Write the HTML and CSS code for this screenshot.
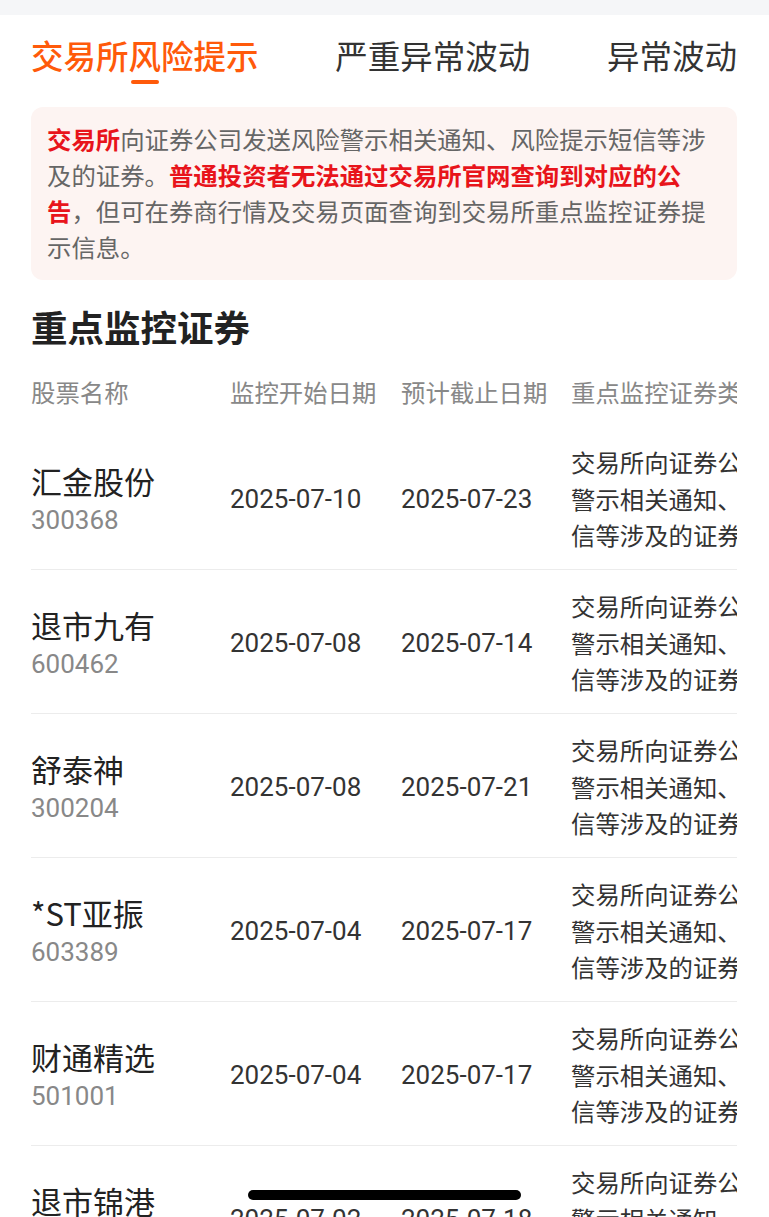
FILE: index.html
```html
<!DOCTYPE html>
<html lang="zh-CN">
<head>
    <meta charset="UTF-8">
    <meta name="viewport" content="width=device-width, initial-scale=1.0">
    <title>重点监控证券</title>
    <link rel="stylesheet" href="styles.css">
</head>
<body>

    <div class="status-bar"></div>

    <div class="tabs">
        <div class="tab active">
            <span>交易所风险提示</span>
            <i class="tab-line"></i>
        </div>
        <div class="tab"><span>严重异常波动</span></div>
        <div class="tab"><span>异常波动</span></div>
    </div>

    <div class="page">
        <div class="notice">
            <b>交易所</b>向证券公司发送风险警示相关通知、风险提示短信等涉及的证券。<b>普通投资者无法通过交易所官网查询到对应的公告</b>，但可在券商行情及交易页面查询到交易所重点监控证券提示信息。
        </div>

        <h2 class="section-title">重点监控证券</h2>

        <div class="table-wrap">
            <div class="table">
                <div class="row head">
                    <div class="cell">股票名称</div>
                    <div class="cell">监控开始日期</div>
                    <div class="cell">预计截止日期</div>
                    <div class="cell">重点监控证券类型</div>
                </div>

                <div class="row">
                    <div class="cell name">汇金股份<small>300368</small></div>
                    <div class="cell date">2025-07-10</div>
                    <div class="cell date">2025-07-23</div>
                    <div class="cell desc">交易所向证券公司发送风险警示相关通知、风险提示短信等涉及的证券</div>
                </div>

                <div class="row">
                    <div class="cell name">退市九有<small>600462</small></div>
                    <div class="cell date">2025-07-08</div>
                    <div class="cell date">2025-07-14</div>
                    <div class="cell desc">交易所向证券公司发送风险警示相关通知、风险提示短信等涉及的证券</div>
                </div>

                <div class="row">
                    <div class="cell name">舒泰神<small>300204</small></div>
                    <div class="cell date">2025-07-08</div>
                    <div class="cell date">2025-07-21</div>
                    <div class="cell desc">交易所向证券公司发送风险警示相关通知、风险提示短信等涉及的证券</div>
                </div>

                <div class="row">
                    <div class="cell name">*ST亚振<small>603389</small></div>
                    <div class="cell date">2025-07-04</div>
                    <div class="cell date">2025-07-17</div>
                    <div class="cell desc">交易所向证券公司发送风险警示相关通知、风险提示短信等涉及的证券</div>
                </div>

                <div class="row">
                    <div class="cell name">财通精选<small>501001</small></div>
                    <div class="cell date">2025-07-04</div>
                    <div class="cell date">2025-07-17</div>
                    <div class="cell desc">交易所向证券公司发送风险警示相关通知、风险提示短信等涉及的证券</div>
                </div>

                <div class="row">
                    <div class="cell name">退市锦港<small>600190</small></div>
                    <div class="cell date">2025-07-02</div>
                    <div class="cell date">2025-07-18</div>
                    <div class="cell desc">交易所向证券公司发送风险警示相关通知、风险提示短信等涉及的证券</div>
                </div>
            </div>
        </div>
    </div>

    <!-- 底部横条 -->
    <div class="home-bar"></div>

</body>
</html>
```

FILE: styles.css
```css
body {
    margin: 0;
    background: #fff;
    font-family: "Noto Sans CJK SC", sans-serif;
    color: #222;
}
.status-bar {
    height: 15px;
    background: #f5f6f8;
}
.tabs {
    display: flex;
    justify-content: space-between;
    padding: 19px 32px 0 31px;
}
.tab {
    display: flex;
    flex-direction: column;
    align-items: center;
    font-size: 32.5px;
    line-height: 41px;
    color: #333;
}
.tab.active {
    color: #ff5a0a;
    font-weight: 500;
}
.tab-line {
    display: block;
    width: 28px;
    height: 4px;
    margin-top: 5px;
    border-radius: 2px;
    background: #ff5a0a;
}
.page {
    padding: 0 32px 0 31px;
}
.notice {
    margin-top: 23px;
    padding: 14px 16px 15px;
    background: #fdf4f2;
    border-radius: 12px;
    font-size: 24.4px;
    line-height: 36px;
    color: #666;
}
.notice b {
    color: #e8141b;
    font-weight: 700;
}
.section-title {
    margin: 22px 0 0;
    font-size: 36.5px;
    line-height: 50px;
    font-weight: 700;
    color: #222;
}
.table-wrap {
    margin-top: 18px;
    overflow: hidden;
}
.table {
    width: 836px;
}
.row {
    display: grid;
    grid-template-columns: 199px 171px 170px 296px;
    align-items: center;
    padding: 18px 0 15.5px;
    border-bottom: 1px solid #ececec;
}
.row.head {
    padding: 0 0 12px;
    border-bottom: none;
    font-size: 24.4px;
    line-height: 44px;
    color: #888;
}
.cell.name {
    font-size: 31px;
    line-height: 42px;
    color: #222;
}
.cell.name small {
    display: block;
    font-family: Roboto, "Noto Sans CJK SC", sans-serif;
    font-size: 26px;
    line-height: 36px;
    color: #888;
}
.cell.date {
    font-family: Roboto, "Noto Sans CJK SC", sans-serif;
    font-size: 26px;
    color: #333;
}
.cell.desc {
    font-size: 24.4px;
    line-height: 36.5px;
    color: #333;
}
.home-bar {
    position: fixed;
    left: 248px;
    bottom: 17px;
    width: 273px;
    height: 10px;
    border-radius: 5px;
    background: #000;
}
```
